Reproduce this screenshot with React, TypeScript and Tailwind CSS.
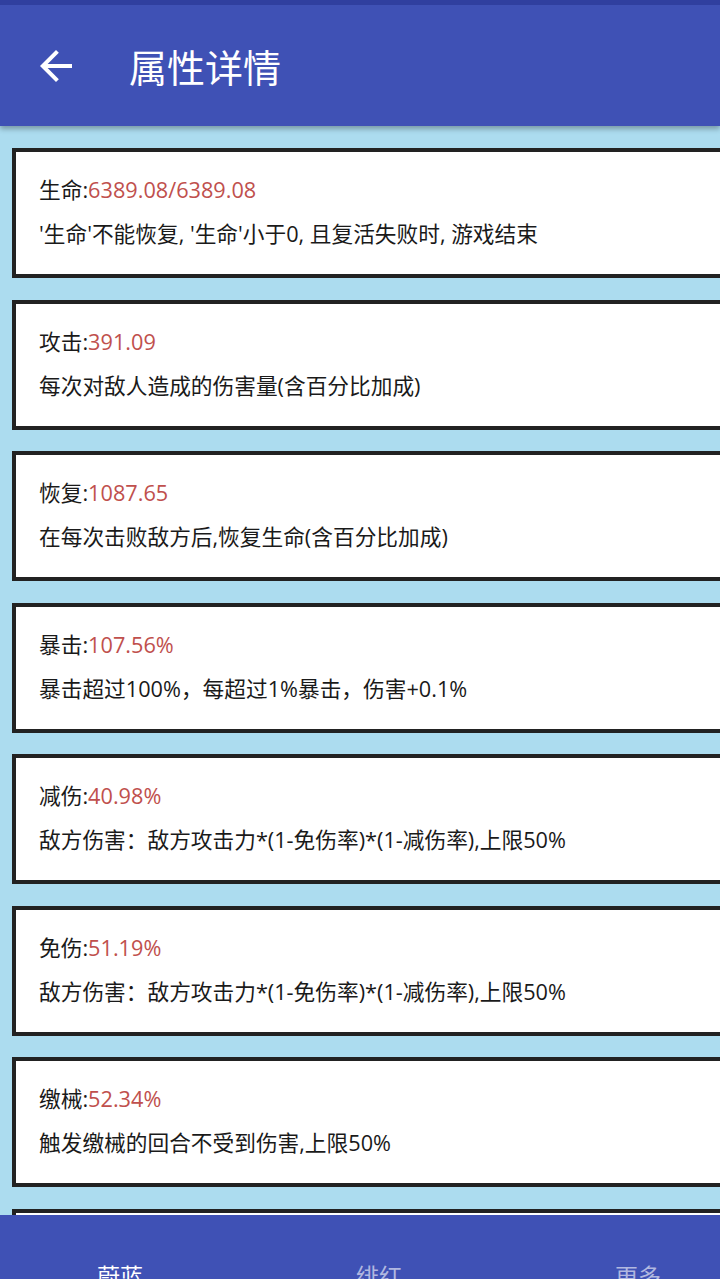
import { MdArrowBack } from 'react-icons/md';

// ==================== DATA ====================

const attributes = [
  { name: '生命', value: '6389.08/6389.08', desc: "'生命'不能恢复, '生命'小于0, 且复活失败时, 游戏结束" },
  { name: '攻击', value: '391.09', desc: '每次对敌人造成的伤害量(含百分比加成)' },
  { name: '恢复', value: '1087.65', desc: '在每次击败敌方后,恢复生命(含百分比加成)' },
  { name: '暴击', value: '107.56%', desc: '暴击超过100%，每超过1%暴击，伤害+0.1%' },
  { name: '减伤', value: '40.98%', desc: '敌方伤害：敌方攻击力*(1-免伤率)*(1-减伤率),上限50%' },
  { name: '免伤', value: '51.19%', desc: '敌方伤害：敌方攻击力*(1-免伤率)*(1-减伤率),上限50%' },
  { name: '缴械', value: '52.34%', desc: '触发缴械的回合不受到伤害,上限50%' },
  { name: '闪避', value: '12.00%', desc: '闪避敌方攻击的概率' },
];

const tabs = [
  { label: '蔚蓝', active: true },
  { label: '绯红', active: false },
  { label: '更多', active: false },
];

// ==================== COMPONENTS ====================

function AttributeCard({ name, value, desc }: { name: string; value: string; desc: string }) {
  return (
    <div className="ml-3 h-[130px] w-[720px] shrink-0 border-4 border-[#222222] bg-white pl-[23px] pt-[23px]">
      <div className="text-[21.7px] leading-[30px] text-[#1a1a1a]">
        {name}:<span className="text-[#c0504d]">{value}</span>
      </div>
      <div className="mt-[14px] text-[21.7px] leading-[30px] text-[#1a1a1a]">{desc}</div>
    </div>
  );
}

export default function App() {
  return (
    <div
      className="flex h-[1279px] w-[720px] flex-col overflow-hidden bg-[#acdcef]"
      style={{ fontFamily: '"Open Sans", "Noto Sans CJK SC", sans-serif' }}
    >
      {/* Status bar + toolbar */}
      <div className="relative z-10 shrink-0 shadow-[0_3px_5px_rgba(0,0,0,0.3)]">
        <div className="h-[5px] bg-[#303f9f]" />
        <div className="flex h-[121px] items-center bg-[#3f51b5]">
          <div className="ml-[32px] flex h-[48px] w-[48px] items-center justify-center">
            <MdArrowBack className="h-[48px] w-[48px] text-white" />
          </div>
          <h1
            className="ml-[49px] text-[38px] font-normal leading-none text-white"
            style={{ fontFamily: '"Noto Sans CJK SC", sans-serif' }}
          >
            属性详情
          </h1>
        </div>
      </div>

      {/* Attribute list */}
      <div className="flex min-h-0 flex-1 flex-col gap-[21.5px] overflow-hidden pt-[22px]">
        {attributes.map((attr) => (
          <AttributeCard key={attr.name} {...attr} />
        ))}
      </div>

      {/* Bottom navigation */}
      <div className="flex h-[64px] shrink-0 items-start justify-between bg-[#3f51b5] pl-[97px] pr-[59px] pt-[46px]">
        {tabs.map((tab) => (
          <span
            key={tab.label}
            className={`text-[23px] leading-[30px] ${tab.active ? 'text-white' : 'text-white/60'}`}
          >
            {tab.label}
          </span>
        ))}
      </div>
    </div>
  );
}
